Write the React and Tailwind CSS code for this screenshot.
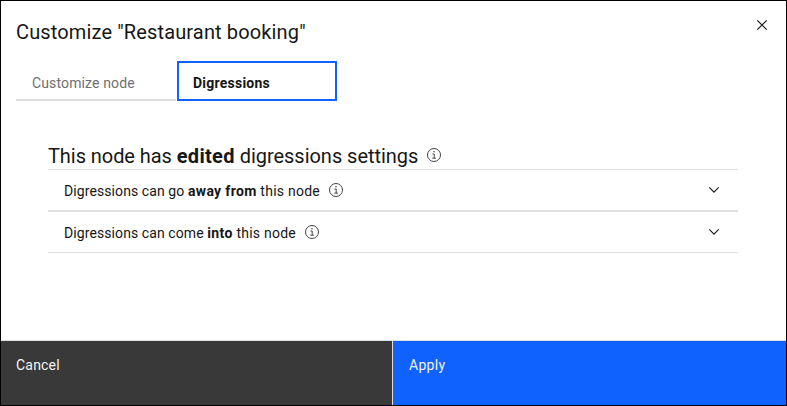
function InfoIcon() {
  return (
    <svg width="16" height="16" viewBox="0 0 16 16" fill="none" stroke="#393939" className="shrink-0">
      <circle cx="8" cy="8" r="6.5" strokeWidth="0.95" />
      <path d="M6.5 7h1.7v4.1M6.3 11.2h3.6" strokeWidth="0.95" />
      <circle cx="8" cy="4.8" r="0.75" fill="#393939" stroke="none" />
    </svg>
  );
}

function Chevron() {
  return (
    <svg width="16" height="16" viewBox="0 0 16 16" fill="none" stroke="#161616" className="mr-4 shrink-0">
      <path d="M3.3 5.4L8 10.1l4.7-4.7" strokeWidth="1.1" />
    </svg>
  );
}

function Row({ before, strong, after }) {
  return (
    <button className="flex h-10 w-full items-center pl-4 text-left text-[14px]">
      <span className="whitespace-pre pt-0.5 tracking-[0.09px]">{before}</span>
      <b className="whitespace-pre pt-0.5 font-bold tracking-[0.34px]">{strong}</b>
      <span className="whitespace-pre pt-0.5 tracking-[0.24px]">{after}</span>
      <span className="ml-2 flex-1">
        <InfoIcon />
      </span>
      <Chevron />
    </button>
  );
}

export default function App() {
  return (
    <div className="flex h-[406px] w-[787px] flex-col border border-black bg-white font-[Roboto,sans-serif] text-[#161616]">
      <header className="flex h-[60px] items-start justify-between pl-[15px] pr-4">
        <h1 className="pt-[17px] text-[20px] leading-[28px] tracking-[0.14px]">Customize "Restaurant booking"</h1>
        <button aria-label="Close" className="mt-4">
          <svg width="16" height="16" viewBox="0 0 16 16" stroke="#161616" strokeWidth="1.2">
            <path d="M3.3 3.3l9.4 9.4M12.7 3.3l-9.4 9.4" />
          </svg>
        </button>
      </header>
      <nav className="flex h-10 pl-[15px] text-[14px]">
        <button className="mr-px flex w-40 items-center border-b-2 border-[#e0e0e0] pl-4 pt-1.5 text-[#6f6f6f] tracking-[0.13px]">
          Customize node
        </button>
        <button className="flex w-40 items-center border-2 border-[#0f62fe] pl-[14px] pt-1 font-bold tracking-[0.24px]">
          Digressions
        </button>
      </nav>
      <main className="flex-1 pl-[47px] pr-12 pt-[40px]">
        <h2 className="flex h-[28px] items-center text-[20px]">
          <span className="whitespace-pre pt-0.5 tracking-[-0.06px]">This node has </span>
          <b className="pt-0.5 font-bold tracking-[0.3px]">edited</b>
          <span className="whitespace-pre pt-0.5 tracking-[-0.03px]"> digressions settings</span>
          <span className="ml-2">
            <InfoIcon />
          </span>
        </h2>
        <section>
          <div className="border-t border-[#e0e0e0]">
            <Row before="Digressions can go " strong="away from" after=" this node" />
          </div>
          <div className="border-b border-t-2 border-[#e0e0e0]">
            <Row before="Digressions can come " strong="into" after=" this node" />
          </div>
        </section>
      </main>
      <footer className="flex h-[65px] border-t border-[#dde1e6] text-[14px] tracking-[0.2px] text-[#f4f4f4]">
        <button className="flex w-[392px] items-start border-r border-[#e0e0e0] bg-[#393939] pl-[15px] pt-[14px]">Cancel</button>
        <button className="flex flex-1 items-start bg-[#0f62fe] pl-4 pt-[14px] tracking-[0.3px]">Apply</button>
      </footer>
    </div>
  );
}
